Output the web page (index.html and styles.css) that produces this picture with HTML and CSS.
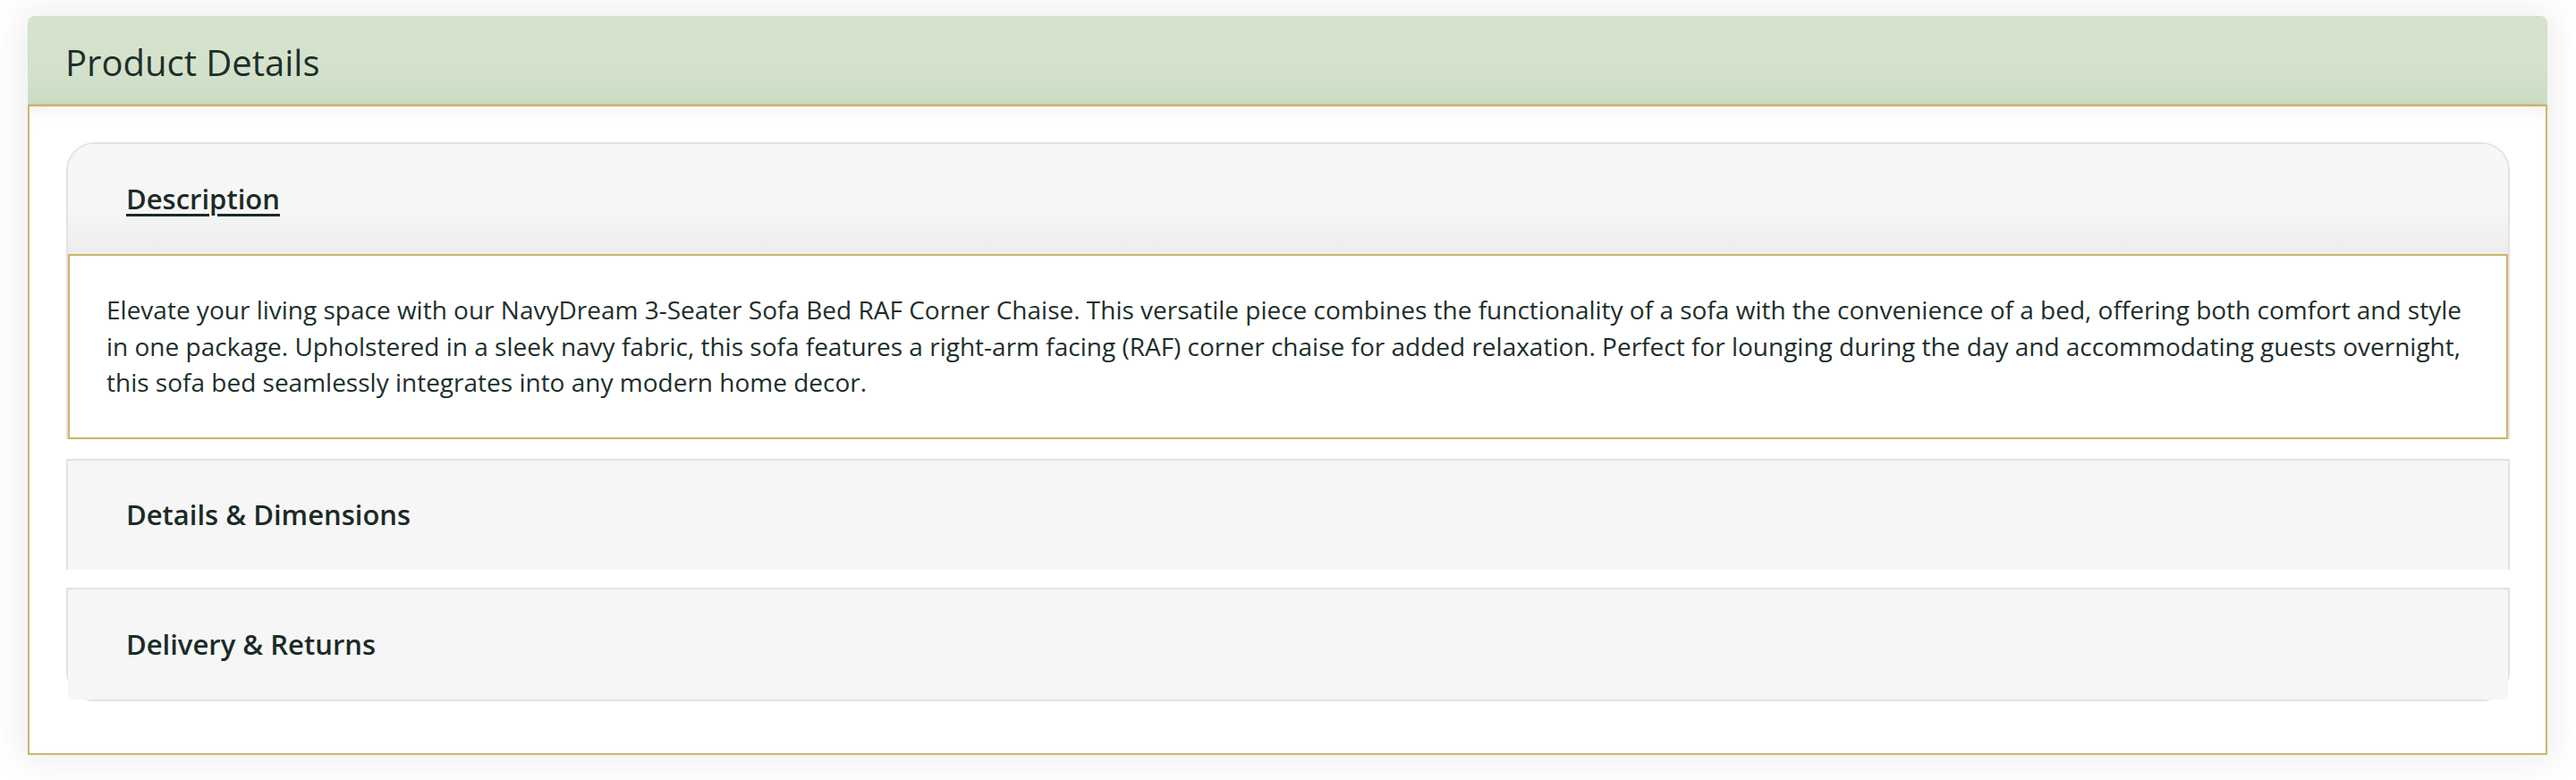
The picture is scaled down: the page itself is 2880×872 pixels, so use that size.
FILE: index.html
```html
<!DOCTYPE html>
<html lang="en">
<head>
<meta charset="utf-8">
<title>Product Details</title>
<link rel="stylesheet" href="styles.css">
</head>
<body>
<div class="page">
  <section class="panel">
    <div class="panel-head"><h2 class="panel-title">Product Details</h2></div>
    <div class="panel-body">
      <div class="acc">
        <div class="acc-item acc-first">
          <div class="acc-head acc-open"><span class="acc-label acc-label-ul">Description</span></div>
          <div class="acc-body">
            <p class="acc-text">Elevate your living space with our NavyDream 3-Seater Sofa Bed RAF Corner Chaise. This versatile piece combines the functionality of a sofa with the convenience of a bed, offering both comfort and style in one package. Upholstered in a sleek navy fabric, this sofa features a right-arm facing (RAF) corner chaise for added relaxation. Perfect for lounging during the day and accommodating guests overnight, this sofa bed seamlessly integrates into any modern home decor.</p>
          </div>
        </div>
        <div class="acc-item acc-mid">
          <div class="acc-head"><span class="acc-label">Details &amp; Dimensions</span></div>
        </div>
        <div class="acc-item acc-last">
          <div class="acc-head"><span class="acc-label">Delivery &amp; Returns</span></div>
        </div>
      </div>
    </div>
  </section>
</div>
</body>
</html>
```

FILE: styles.css
```css
html, body {
  margin: 0;
  padding: 0;
  background: #ffffff;
}
body {
  font-family: "Open Sans", "Noto Sans", sans-serif;
  color: #1d2f2a;
}
.page {
  padding: 18px 32px 29px 31px;
  background: #ffffff;
}
.panel {
  box-shadow: 0 0 36px 8px rgba(0, 0, 0, 0.07);
  border-radius: 8px 8px 0 0;
}
.panel-head {
  height: 97px;
  border: 1px solid #d6d9d3;
  border-bottom: 1px solid #b7c5ae;
  border-radius: 8px 8px 0 0;
  background: linear-gradient(to bottom, #d5e3cd 0%, #d4e2cc 60%, #ccdbc4 100%);
  display: flex;
  align-items: center;
  padding: 0 41px;
}
.panel-title {
  margin: 0;
  font-size: 40px;
  font-weight: 400;
  line-height: 1.2;
  color: #1d2f2a;
  position: relative;
  top: 2px;
}
.panel-body {
  border: 2px solid #cfb46b;
  background: #ffffff;
  padding: 40px 40px 58px 41px;
  box-shadow: inset 0 16px 22px -14px rgba(0, 0, 0, 0.07);
}
.acc {
  display: flex;
  flex-direction: column;
}
.acc-item {
  border: 2px solid #e3e3e3;
  border-bottom: none;
  background: #f6f6f6;
}
.acc-first {
  border-radius: 32px 32px 0 0;
  overflow: hidden;
  background: #ffffff;
}
.acc-mid {
  margin-top: 22px;
}
.acc-last {
  margin-top: 20px;
  border-bottom: 2px solid #e3e3e3;
  border-radius: 0 0 32px 32px;
}
.acc-head {
  padding: 37px 65px 38px;
  background: #f6f6f6;
  line-height: 48px;
  font-size: 31px;
  font-weight: 600;
  color: #1a2b27;
}
.acc-open {
  background: linear-gradient(to bottom, #f7f7f7 0%, #f6f6f6 60%, #ededed 100%);
}
.acc-mid .acc-head {
  padding: 36px 65px 38px;
}
.acc-last .acc-head {
  padding: 37px 65px 38px;
}
.acc-label-ul {
  text-decoration: underline;
  text-decoration-thickness: 3px;
  text-underline-offset: 5px;
}
.acc-body {
  border: 2px solid #cfb46b;
  background: #ffffff;
  padding: 40px 40px 41px 41px;
}
.acc-text {
  margin: 0;
  font-size: 28px;
  line-height: 40.5px;
  color: #1d2f2a;
}
```
